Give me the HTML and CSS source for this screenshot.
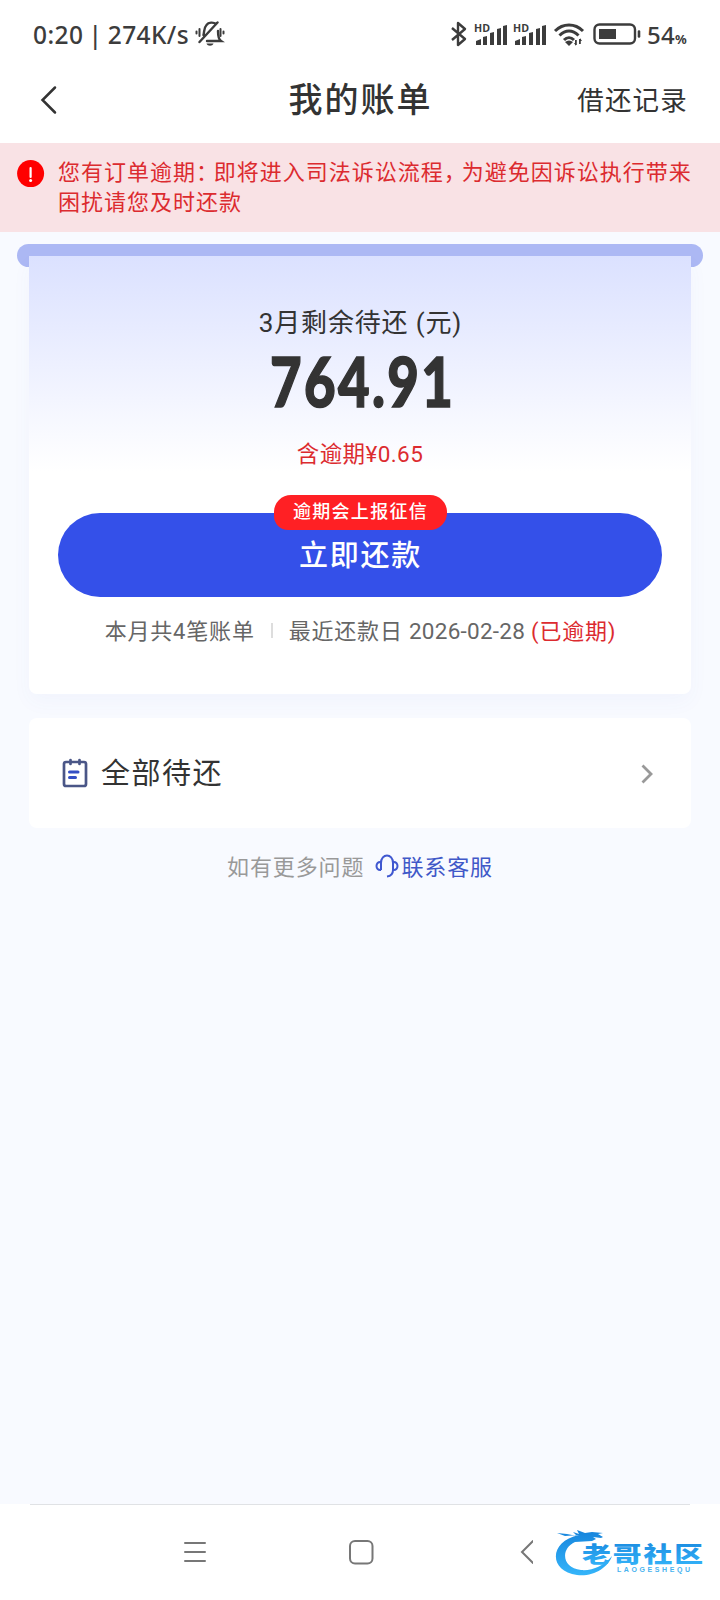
FILE: index.html
```html
<!DOCTYPE html>
<html lang="zh-CN">
<head>
<meta charset="utf-8">
<title>我的账单</title>
<link rel="stylesheet" href="styles.css">
</head>
<body>
<div class="screen">
  <div class="status">
    <span class="status-text">0:20 | 274K/s</span>
    <svg class="mute" width="30" height="26" viewBox="0 0 30 26" fill="none" stroke="#3c3c3c" stroke-width="2" stroke-linecap="round">
      <path d="M1.500 10.500v2M4.500 8v7M25.500 8v7M28.500 10.500v2"/>
      <path d="M8.500 14c1-3 0-7 3-10 2-3 7-3 9.500-1M12 20h14c-3-2-3-6-3-10M4.500 21 22.500 1.500" stroke-width="2.400"/>
      <path d="M11.500 22.500c1 3 6 3 7 0z" fill="#3c3c3c" stroke="none"/>
    </svg>
    <svg class="status-icons" width="195" height="28" viewBox="0 0 195 28">
      <path d="M3 8 16 19 9 25V3l7 6L3 20" fill="none" stroke="#3c3c3c" stroke-width="2.4" stroke-linejoin="round"/>
      <text x="25" y="11.500" class="hd" textLength="16" lengthAdjust="spacingAndGlyphs">HD</text>
      <path d="M27 21l5-2v6h-5zM34 17l4-1v9h-4zM41 13l4-1v13h-4zM48 9l4-1v17h-4zM54 6l4-1v20h-4z" fill="#3c3c3c"/>
      <text x="64" y="11.500" class="hd" textLength="16" lengthAdjust="spacingAndGlyphs">HD</text>
      <path d="M66 21l5-2v6h-5zM73 17l4-1v9h-4zM80 13l4-1v13h-4zM87 9l4-1v17h-4zM93 6l4-1v20h-4z" fill="#3c3c3c"/>
      <path d="M106 11c8-8 20-8 28 0M110.500 15.500c6-6 13-6 19 0M115 20c3-3 7-3 10 0" fill="none" stroke="#3c3c3c" stroke-width="3"/>
      <path d="m116 22 4 4 4-4q-4-3-8 0zM126 20h1.8v5H126zM130 19h1.8v5H130z" fill="#3c3c3c"/>
      <path d="m127 26-2-3h2zM131 18l2 3h-2z" fill="#3c3c3c"/>
      <rect x="145.500" y="4.500" width="40.500" height="19" rx="5" fill="none" stroke="#3c3c3c" stroke-width="2.4"/>
      <path d="M150 9h17v10h-17z" fill="#3c3c3c"/><path d="M190 11.500v5" stroke="#3c3c3c" stroke-width="2.6" stroke-linecap="round"/>
    </svg>
    <span class="battery">54<small>%</small></span>
  </div>

  <header class="titlebar">
    <svg width="18" height="30" viewBox="0 0 18 30" fill="none" stroke="#333" stroke-width="2.5" stroke-linecap="round"><path d="M15 2.500 2.500 15 15 27.500"/></svg>
    <h1>我的账单</h1>
    <span class="history">借还记录</span>
  </header>

  <div class="notice">
    <svg width="28" height="28" viewBox="0 0 28 28"><circle cx="13.600" cy="13.600" r="13.500" fill="#f00"/><path d="M13.600 8v9" stroke="#fff" stroke-width="2.2" stroke-linecap="round"/><circle cx="13.600" cy="20.500" r="1.500" fill="#fff"/></svg>
    <p>您有订单逾期<span class="punct">：</span>即将进入司法诉讼流程<span class="punct">，</span>为避免因诉讼执行带来<br>困扰请您及时还款</p>
  </div>

  <main>
    <div class="slot">
      <section class="bill">
        <div class="bill-title">3月剩余待还 (元)</div>
        <div class="amount">764.91</div>
        <div class="overdue">含逾期¥0.65</div>
        <div class="pay"><span class="badge">逾期会上报征信</span>立即还款</div>
        <div class="summary"><span class="count">本月共4笔账单</span><i></i><span class="due">最近还款日 <b>2026-02-28</b></span><em>(已逾期)</em></div>
      </section>
    </div>
    <section class="all">
      <svg width="26" height="30" viewBox="0 0 26 30" fill="none" stroke-linecap="round"><path d="M4 4h18q2 0 2 2v20q0 2-2 2H4q-2 0-2-2V6q0-2 2-2M8.500 2v4M17.500 2v4" stroke="#4a5687" stroke-width="2.700"/><path d="M7.500 14h8.500M7.500 19.500h6" stroke="#344fc4" stroke-width="3"/></svg>
      <span>全部待还</span>
      <svg class="next" width="14" height="22" viewBox="0 0 14 22" fill="none" stroke="#999" stroke-width="2.800"><path d="m2.500 2.500 8.500 8.500-8.500 8.500"/></svg>
    </section>
    <div class="help">
      <span>如有更多问题</span>
      <svg width="24" height="24" viewBox="0 0 24 24" fill="none" stroke="#4058d0" stroke-width="2"><path d="M6 16V9c0-10 12-10 12 0v7c0 4-2 6-6 6.500M6 8C0 7 0 17 6 16M18 8c6-1 6 9 0 8"/></svg>
      <a>联系客服</a>
    </div>
  </main>

  <footer class="nav">
    <div class="line"></div>
    <svg class="keys" width="350" height="28" viewBox="0 0 350 28" fill="none" stroke="#777" stroke-width="2" stroke-linecap="round">
      <path d="M2 4h20M2 13h20M2 22h20"/><rect x="167" y="2" width="22.500" height="22.500" rx="5"/><path d="m350 2-11 11 11 11"/>
    </svg>
    <svg class="mark" width="150" height="56" viewBox="0 0 150 56">
      <defs><linearGradient id="blue" x2="0" y2="1"><stop stop-color="#1684dc"/><stop offset="1" stop-color="#35b5fa"/></linearGradient></defs>
      <path d="M24 9C-6 15-7 45 22 49c16 2 31-7 35-19-8 10-20 15-31 14C7 42 5 23 20 16l17-1 4-2-3-2 8 1 2-1-5-3 5-1-11-1-7 1-8-3 2 4-6-2 4 4-10-2-10-1 8 3z" fill="url(#blue)"/>
      <text class="mark-cn" transform="translate(27 36) scale(1.310 1)" fill="url(#blue)" letter-spacing="1.500">老哥社区</text>
      <text class="mark-en" x="62" y="46" textLength="73" fill="#48b3ef">LAOGESHEQU</text>
    </svg>
  </footer>
</div>
</body>
</html>
```
FILE: styles.css
```css
* { box-sizing: border-box; }
body { margin: 0; background: #fff; color: #333; font-family: Roboto, "Noto Sans CJK SC", sans-serif; }
svg { display: block; flex: none; }
.screen { width: 720px; height: 1600px; display: flex; flex-direction: column; background: #f8faff; white-space: nowrap; overflow: hidden; }
.status { height: 68px; background: #fff; display: flex; align-items: center; padding: 0 0 0 33px; color: #3c3c3c; font-family: "Noto Sans", sans-serif; font-weight: 500; }
.status-text { width: 162px; font-size: 24.500px; letter-spacing: .4px; word-spacing: -1.500px; }
.status-icons { margin-left: 224px; }
.hd { font: 700 10.500px "Open Sans", sans-serif; fill: #3c3c3c; }
.battery { font-size: 24px; margin-left: 3px; letter-spacing: .3px; }
.battery small { font-size: 13px; font-weight: 700; }
.titlebar { height: 75px; background: #fff; display: grid; grid-template-columns: 220px 1fr 220px; align-items: center; padding: 0 32px 12px 40px; }
h1 { margin: 0; text-align: center; font-size: 34px; font-weight: 500; letter-spacing: 2px; line-height: 48px; padding: 1px 7px 0 0; }
.history { justify-self: end; font-size: 26.500px; letter-spacing: 1.200px; margin-top: -2px; }
.notice { height: 89px; background: #f9e2e5; display: flex; padding: 15px 0 0 17px; gap: 13px; color: #dc2b2f; font-size: 22px; line-height: 30px; letter-spacing: 1px; }
.notice svg { margin-top: 2px; }
.notice p { margin: 0; }
.punct { letter-spacing: -4.200px; }
main { flex: 1; padding: 12px 17px; }
.slot { height: 23px; border-radius: 12px; background: #acb8f4; padding: 12px 12px 0; }
.bill { height: 438px; position: relative; border-radius: 0 0 8px 8px; background: linear-gradient(#dbe1ff 0, #fff 215px); box-shadow: 0 8px 20px rgba(80, 100, 200, .04); display: flex; flex-direction: column; align-items: center; padding-top: 47px; clip-path: inset(0 -30px -40px -30px); }
.bill-title { font-size: 26px; line-height: 40px; letter-spacing: .85px; padding-left: 1px; }
.amount { height: 84px; line-height: 82px; margin-top: -3px; padding-left: 6px; font-family: Lato, sans-serif; font-size: 69px; font-weight: 900; letter-spacing: 3px; transform: scaleX(.79); -webkit-text-stroke: 1.500px; }
.overdue { color: #dc2b2f; font-size: 22.500px; line-height: 32px; margin-top: 14px; letter-spacing: .4px; }
.pay { position: relative; width: 604px; height: 84px; margin-top: 43px; border-radius: 42px; background: #3450e9; color: #fff; font-size: 29px; font-weight: 500; line-height: 86px; letter-spacing: 1.700px; text-align: center; padding-left: 1px; }
.badge { position: absolute; left: 216px; top: -18px; width: 173px; height: 35px; border-radius: 17px 17px 17px 14px; background: #ff2024; font-size: 18px; line-height: 34px; letter-spacing: 1.300px; }
.summary { height: 36px; margin-top: 14px; display: flex; align-items: center; color: #666; font-size: 22px; letter-spacing: .8px; padding-left: 1px; }
.summary i { width: 2px; height: 15px; background: #ddd; margin: 2px 16px 0; }
.summary b { font-weight: 400; font-size: 22.500px; letter-spacing: .25px; }
.summary em { font-style: normal; color: #dc2b2f; margin-left: 6px; }
.all { height: 110px; margin: 451px 12px 0; background: #fff; border-radius: 8px; display: flex; align-items: center; padding: 0 37px 0 33px; }
.all span { margin-left: 13px; font-size: 29px; letter-spacing: 1.500px; flex: 1; margin-top: -5px; }
.next { margin-top: 2px; }
.help { display: flex; justify-content: center; align-items: center; height: 36px; margin-top: 19px; color: #999; font-size: 22px; letter-spacing: .9px; }
.help svg { margin: 2px 2px 0 11px; }
.help a { color: #4058c8; }
.nav { height: 96px; background: #fff; display: grid; grid-template-columns: 183px 350px 22px 150px; grid-template-rows: 1px 95px; align-items: center; }
.line { grid-column: 1 / 5; width: 660px; height: 1px; margin-left: 30px; background: #e0e2e5; }
.keys { grid-column: 2; }
.mark { grid-column: 4; margin-top: 3px; }
.mark-cn { font: 900 22px "Noto Sans CJK SC", sans-serif; }
.mark-en { font: 700 7px "Liberation Sans", sans-serif; }
```
